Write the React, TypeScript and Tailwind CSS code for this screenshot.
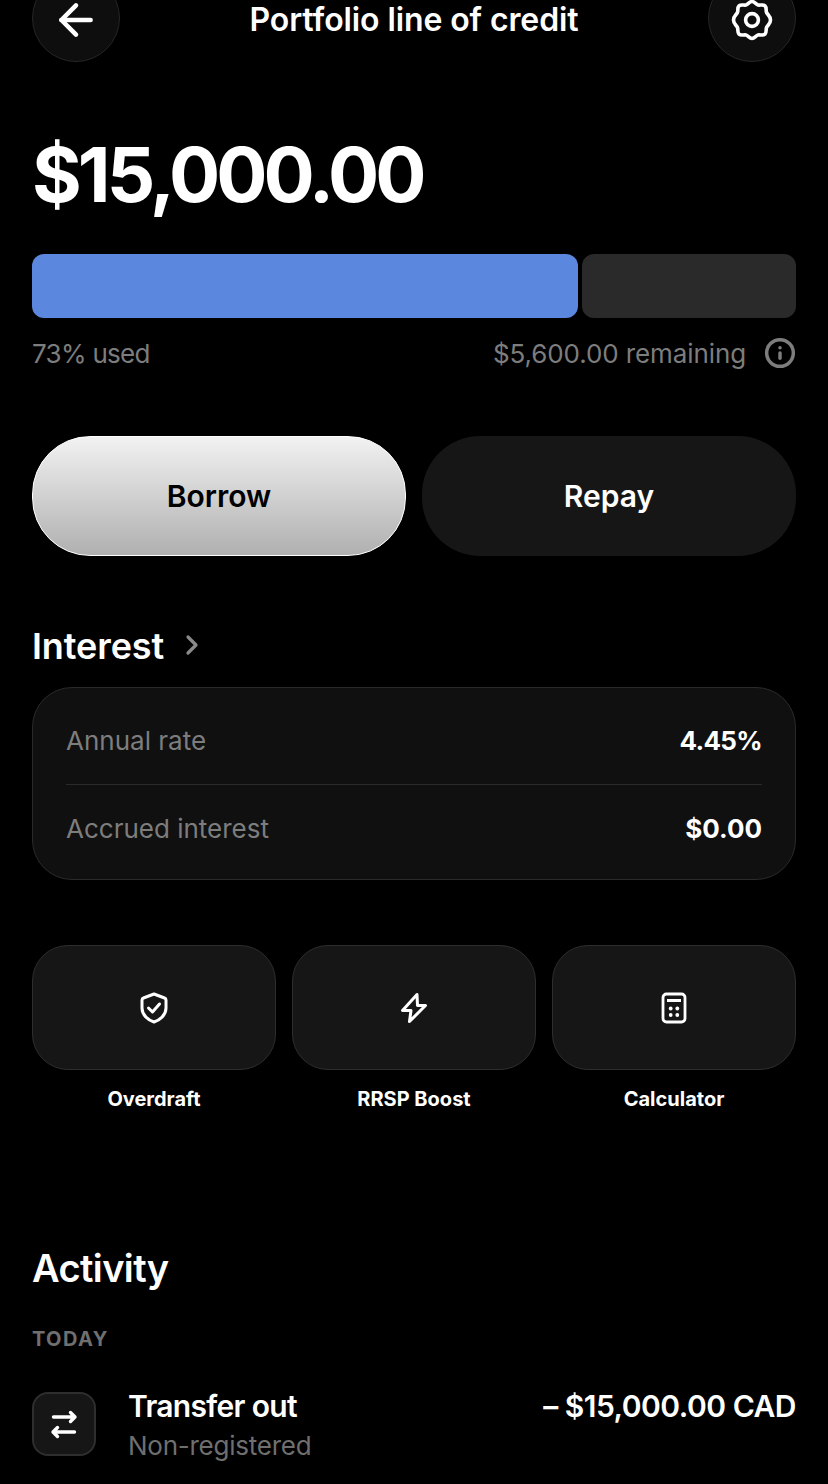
import React from 'react';
import { ArrowLeft, ChevronRight, Info } from 'lucide-react';

const GearBadge = () => (
  <svg width="44" height="44" viewBox="0 0 44 44" fill="none" stroke="white" strokeWidth="3.6" strokeLinejoin="round">
    <path d="M22 3.5 C24.5 3.5 26 6.5 28 7 C30.2 7.5 33 6 35 7.8 C36.9 9.6 35.6 12.6 36.6 14.6 C37.6 16.6 40.5 18 40.5 22 C40.5 26 37.6 27.4 36.6 29.4 C35.6 31.4 36.9 34.4 35 36.2 C33 38 30.2 36.5 28 37 C26 37.5 24.5 40.5 22 40.5 C19.5 40.5 18 37.5 16 37 C13.8 36.5 11 38 9 36.2 C7.1 34.4 8.4 31.4 7.4 29.4 C6.4 27.4 3.5 26 3.5 22 C3.5 18 6.4 16.6 7.4 14.6 C8.4 12.6 7.1 9.6 9 7.8 C11 6 13.8 7.5 16 7 C18 6.5 19.5 3.5 22 3.5 Z" />
    <circle cx="22" cy="22" r="6.4" />
  </svg>
);

const ShieldIcon = () => (
  <svg width="32" height="32" viewBox="0 0 32 32" fill="none" stroke="white" strokeWidth="3" strokeLinecap="round" strokeLinejoin="round">
    <path d="M16 2 L26.5 6 C27.6 6.4 28 7 28 8 V16 C28 23 22 28 16 30 C10 28 4 23 4 16 V8 C4 7 4.4 6.4 5.5 6 Z" />
    <path d="M10.5 16 L14.5 20 L21.5 12" />
  </svg>
);

const BoltIcon = () => (
  <svg width="32" height="32" viewBox="0 0 32 32" fill="none" stroke="white" strokeWidth="3" strokeLinejoin="round">
    <path d="M19 2.5 L4.5 18.5 H13 L11.5 29.5 L27.5 13.5 H19.5 Z" />
  </svg>
);

const CalculatorIcon = () => (
  <svg width="32" height="32" viewBox="0 0 32 32" fill="none" stroke="white">
    <rect x="5" y="2" width="22" height="28" rx="3.5" strokeWidth="2.8" />
    <path d="M9 8.5 H23" strokeWidth="3" />
    <g fill="white" stroke="none">
      <circle cx="12.7" cy="16.5" r="1.9" />
      <circle cx="19.3" cy="16.5" r="1.9" />
      <circle cx="12.7" cy="23" r="1.9" />
      <circle cx="19.3" cy="23" r="1.9" />
    </g>
  </svg>
);

const TransferIcon = () => (
  <svg width="32" height="32" viewBox="0 0 32 32" fill="none" stroke="white" strokeWidth="3.4" strokeLinecap="round" strokeLinejoin="round">
    <path d="M5.5 9 H27 M22.5 4.5 L27 9 L22.5 13.5" />
    <path d="M26.5 24 H5 M9.5 19.5 L5 24 L9.5 28.5" />
  </svg>
);

const tiles = [
  { label: 'Overdraft', icon: <ShieldIcon /> },
  { label: 'RRSP Boost', icon: <BoltIcon /> },
  { label: 'Calculator', icon: <CalculatorIcon /> },
];

const rates = [
  { label: 'Annual rate', value: '4.45%', row: 'h-[88px] border-b border-[#2a2a2a]', valueClass: 'tracking-[-0.7px]' },
  { label: 'Accrued interest', value: '$0.00', row: 'h-[86px]', valueClass: '' },
];

export default function App() {
  return (
    <div className="h-[1484px] overflow-hidden bg-black px-8 font-['Inter',sans-serif] text-white">
      <header className="-mt-[26px] flex items-center justify-between">
        <button className="flex h-[88px] w-[88px] items-center justify-center rounded-full border border-[#262626] bg-[#0e0e0e]">
          <ArrowLeft size={50} strokeWidth={2.2} className="mt-1" />
        </button>
        <h1 className="mt-1 text-[32px] font-semibold tracking-[-0.1px]">Portfolio line of credit</h1>
        <button className="flex h-[88px] w-[88px] items-center justify-center rounded-full border border-[#262626] bg-[#0e0e0e]">
          <span className="mt-1">
            <GearBadge />
          </span>
        </button>
      </header>

      <div className="mt-[66px] text-[76px] leading-[92px] font-bold tracking-[-3.9px]">$15,000.00</div>

      <div className="mt-[34px] flex h-16 gap-1">
        <div className="w-[546px] rounded-xl bg-[#5b87de]" />
        <div className="flex-1 rounded-xl bg-[#2a2a2a]" />
      </div>
      <div className="mt-[19px] flex h-8 items-center justify-between text-[26px] text-[#7d7d7d]">
        <span className="tracking-[-0.7px]">73% used</span>
        <span className="flex items-center gap-[18px] tracking-[-0.1px]">
          $5,600.00 remaining
          <Info size={32} strokeWidth={2.6} />
        </span>
      </div>

      <div className="mt-[67px] grid grid-cols-2 gap-4">
        <button className="h-[120px] rounded-[58px] border-[1.5px] border-white bg-gradient-to-b from-[#f2f2f2] to-[#b0b0b0] text-[30px] font-semibold text-black">
          Borrow
        </button>
        <button className="h-[120px] rounded-[58px] bg-[#161616] text-[30px] font-semibold">Repay</button>
      </div>

      <div className="mt-[68px] flex h-11 items-center gap-[12px]">
        <h2 className="text-[36px] font-semibold tracking-[-0.1px]">Interest</h2>
        <ChevronRight size={32} strokeWidth={2.4} className="-mt-0.5 text-[#8a8a8a]" />
      </div>

      <div className="mt-[19px] rounded-[40px] border border-[#2a2a2a] bg-[#101010] px-[33px] pt-[9px] pb-[8px]">
        {rates.map((item) => (
          <div key={item.label} className={`flex items-center justify-between ${item.row}`}>
            <span className="text-[26px] text-[#7d7d7d]">{item.label}</span>
            <span className={`text-[26px] font-bold ${item.valueClass}`}>{item.value}</span>
          </div>
        ))}
      </div>

      <div className="mt-[65px] grid grid-cols-3 gap-4">
        {tiles.map((tile) => (
          <div key={tile.label}>
            <div className="flex h-[125px] items-center justify-center rounded-[36px] border border-[#2e2e2e] bg-[#161616]">
              {tile.icon}
            </div>
            <div className="mt-[17px] text-center text-[20px] leading-6 font-bold">{tile.label}</div>
          </div>
        ))}
      </div>

      <h2 className="mt-[134px] text-[38px] leading-[46px] font-semibold tracking-[-0.6px]">Activity</h2>
      <div className="mt-[36px] text-[20px] leading-6 font-bold tracking-[1.4px] text-[#6f6f6f]">TODAY</div>

      <div className="mt-[35px] flex items-start justify-between">
        <div className="flex gap-8">
          <div className="mt-[6px] flex h-16 w-16 items-center justify-center rounded-2xl border-2 border-[#2e2e2e] bg-[#161616]">
            <TransferIcon />
          </div>
          <div>
            <div className="text-[30px] leading-10 font-semibold tracking-[-0.7px]">Transfer out</div>
            <div className="text-[26px] leading-10 tracking-[-0.25px] text-[#6f6f6f]">Non-registered</div>
          </div>
        </div>
        <div className="text-[30px] leading-10 font-semibold tracking-[-0.5px]">– $15,000.00 CAD</div>
      </div>
    </div>
  );
}
